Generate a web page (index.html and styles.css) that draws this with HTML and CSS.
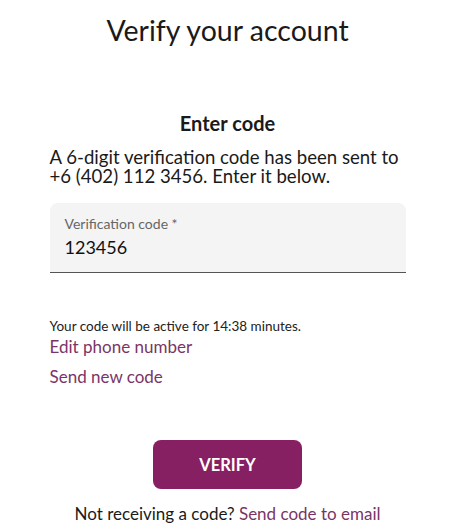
FILE: index.html
```html
<!DOCTYPE html>
<html lang="en">
<head>
<meta charset="utf-8">
<title>Verify your account</title>
<link rel="stylesheet" href="styles.css">
</head>
<body>
<main class="page">
  <h1 class="title">Verify your account</h1>
  <section class="card">
    <h2 class="subtitle">Enter code</h2>
    <p class="intro">A 6-digit verification code has been sent to +6 (402) 112 3456. Enter it below.</p>
    <div class="field">
      <span class="field-label">Verification code *</span>
      <span class="field-value">123456</span>
    </div>
    <p class="timer">Your code will be active for 14:38 minutes.</p>
    <a class="link link-edit" href="#">Edit phone number</a>
    <a class="link link-resend" href="#">Send new code</a>
    <div class="actions">
      <button class="btn" type="button">VERIFY</button>
    </div>
    <p class="footer">Not receiving a code? <a class="link-inline" href="#">Send code to email</a></p>
  </section>
</main>
</body>
</html>
```
FILE: styles.css
```css
* { box-sizing: border-box; }
html, body { margin: 0; padding: 0; background: #fff; }
body {
  font-family: Lato, "Open Sans", "Liberation Sans", sans-serif;
  color: #1a1a1a;
}
.page {
  width: 356px;
  margin: 0 auto;
  padding-top: 12px;
}
.title {
  margin: 0;
  text-align: center;
  font-weight: 400;
  font-size: 28.5px;
  line-height: 36px;
}
.card { display: flex; flex-direction: column; }
.subtitle {
  margin: 62px 0 0;
  text-align: center;
  font-size: 20px;
  font-weight: 700;
  line-height: 26px;
}
.intro {
  margin: 12px 0 0;
  font-size: 18.6px;
  line-height: 19px;
}
.field {
  margin-top: 17px;
  height: 70px;
  background: #f4f4f4;
  border-radius: 8px 8px 0 0;
  border-bottom: 1px solid #555;
  padding: 12px 15px 0;
  display: flex;
  flex-direction: column;
}
.field-label {
  font-size: 14px;
  line-height: 18px;
  color: #666;
}
.field-value {
  margin-top: 3px;
  font-size: 18px;
  line-height: 22px;
  color: #111;
}
.timer {
  margin: 45px 0 0;
  font-size: 13.5px;
  line-height: 16px;
  color: #222;
}
.link {
  color: #7a3566;
  text-decoration: none;
  font-size: 17px;
  line-height: 22px;
}
.link-edit { margin-top: 2px; }
.link-resend { margin-top: 8px; }
.actions {
  margin-top: 52px;
  display: flex;
  justify-content: center;
}
.btn {
  width: 149px;
  height: 49px;
  border: 0;
  border-radius: 8px;
  background: #862063;
  color: #fff;
  font-family: inherit;
  font-weight: 700;
  font-size: 16.5px;
}
.footer {
  margin: 14px 0 0;
  text-align: center;
  font-size: 17px;
  line-height: 22px;
  color: #1a1a1a;
}
.link-inline { color: #7a3566; text-decoration: none; }
```
